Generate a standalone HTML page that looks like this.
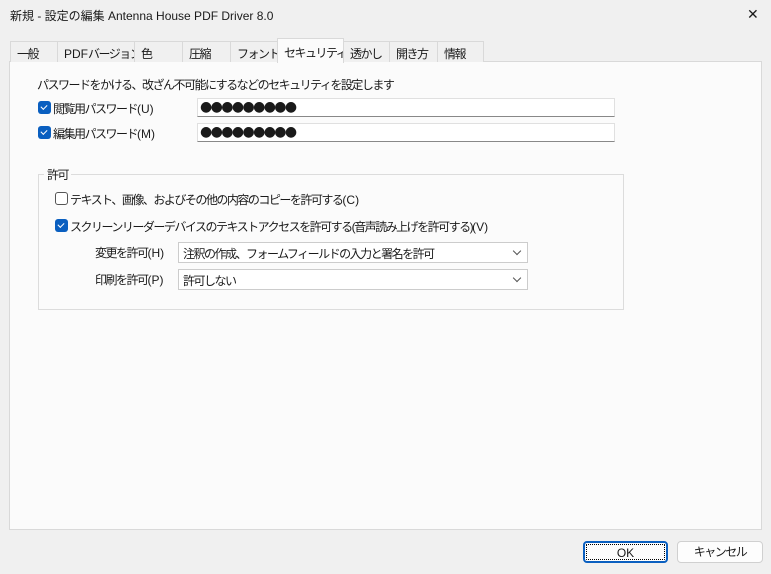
<!DOCTYPE html>
<html><head><meta charset="utf-8"><style>
*{box-sizing:border-box;margin:0;padding:0}
body{width:771px;height:574px;background:#f0f0f0;font-family:"Liberation Sans","Noto Sans CJK JP",sans-serif;font-size:12px;letter-spacing:-1.5px;color:#1a1a1a;position:relative;overflow:hidden}
.a{position:absolute;white-space:nowrap}
.l{letter-spacing:0}
.tab{position:absolute;top:41px;height:21px;border:1px solid #d9d9d9;border-bottom:none;background:#f0f0f0;padding:3px 0 0 6px;white-space:nowrap;overflow:hidden}
.panel{position:absolute;left:9px;top:61px;width:753px;height:469px;background:#fbfbfb;border:1px solid #d9d9d9}
.cb{position:absolute;width:13px;height:13px;border-radius:3px}
.on{background:#0a5fc0}
.on::after{content:"";position:absolute;left:3px;top:2px;width:5px;height:3px;border-left:1.5px solid #fff;border-bottom:1.5px solid #fff;transform:rotate(-45deg) translate(-1px,1px)}
.off{border:1px solid #555;background:#fff}
.pw{position:absolute;left:197px;width:418px;height:19px;background:#fff;border:1px solid #e0e0e0;border-bottom:1px solid #888;font-size:14px;letter-spacing:-1.6px;padding-left:2px;line-height:16px;font-family:"DejaVu Sans",sans-serif}
.cmb{position:absolute;left:178px;width:350px;height:21px;background:#fff;border:1px solid #ccc;padding:2px 0 0 4px;white-space:nowrap}
.cmb::after{content:"";position:absolute;right:7px;top:5px;width:5px;height:5px;border-right:1px solid #555;border-bottom:1px solid #555;transform:rotate(45deg)}
.btn{position:absolute;top:541px;height:22px;background:#fdfdfd;border:1px solid #d0d0d0;border-radius:4px;text-align:center;line-height:20px}
</style></head><body>
<div class="a" style="left:10px;top:7px;font-size:12px;letter-spacing:0">新規 - 設定の編集 Antenna House PDF Driver 8.0</div>
<div class="a" style="left:747px;top:6px;font-size:14px;letter-spacing:0">✕</div>
<div class="panel"></div>
<div class="tab" style="left:10px;width:48px">一般</div>
<div class="tab" style="left:57px;width:78px"><span class="l">PDF</span>バージョン</div>
<div class="tab" style="left:134px;width:49px">色</div>
<div class="tab" style="left:182px;width:49px">圧縮</div>
<div class="tab" style="left:230px;width:48px">フォント</div>
<div class="tab" style="left:277px;top:38px;height:25px;width:67px;background:#fbfbfb;padding-top:5px">セキュリティ</div>
<div class="tab" style="left:343px;width:47px">透かし</div>
<div class="tab" style="left:389px;width:49px">開き方</div>
<div class="tab" style="left:437px;width:47px">情報</div>
<div class="a" style="left:37px;top:76px">パスワードをかける、改ざん不可能にするなどのセキュリティを設定します</div>
<div class="cb on" style="left:38px;top:101px"></div><div class="a" style="left:53px;top:100px">閲覧用パスワード<span class="l">(U)</span></div>
<div class="cb on" style="left:38px;top:126px"></div><div class="a" style="left:53px;top:125px">編集用パスワード<span class="l">(M)</span></div>
<div class="pw" style="top:98px">●●●●●●●●●</div>
<div class="pw" style="top:123px">●●●●●●●●●</div>
<div class="a" style="left:38px;top:174px;width:586px;height:136px;border:1px solid #dcdcdc"></div>
<div class="a" style="left:44px;top:166px;background:#fbfbfb;padding:0 3px">許可</div>
<div class="cb off" style="left:55px;top:192px"></div><div class="a" style="left:70px;top:191px">テキスト、画像、およびその他の内容のコピーを許可する<span class="l">(C)</span></div>
<div class="cb on" style="left:55px;top:219px"></div><div class="a" style="left:70px;top:218px">スクリーンリーダーデバイスのテキストアクセスを許可する(音声読み上げを許可する)<span class="l">(V)</span></div>
<div class="a" style="left:95px;top:244px">変更を許可<span class="l">(H)</span></div>
<div class="cmb" style="top:242px">注釈の作成、フォームフィールドの入力と署名を許可</div>
<div class="a" style="left:95px;top:271px">印刷を許可<span class="l">(P)</span></div>
<div class="cmb" style="top:269px">許可しない</div>
<div class="btn" style="left:583px;width:85px;border:2px solid #0a5fc0;outline:1px dotted #000;outline-offset:-4px;letter-spacing:0">OK</div>
<div class="btn" style="left:677px;width:86px">キャンセル</div>
</body></html>
